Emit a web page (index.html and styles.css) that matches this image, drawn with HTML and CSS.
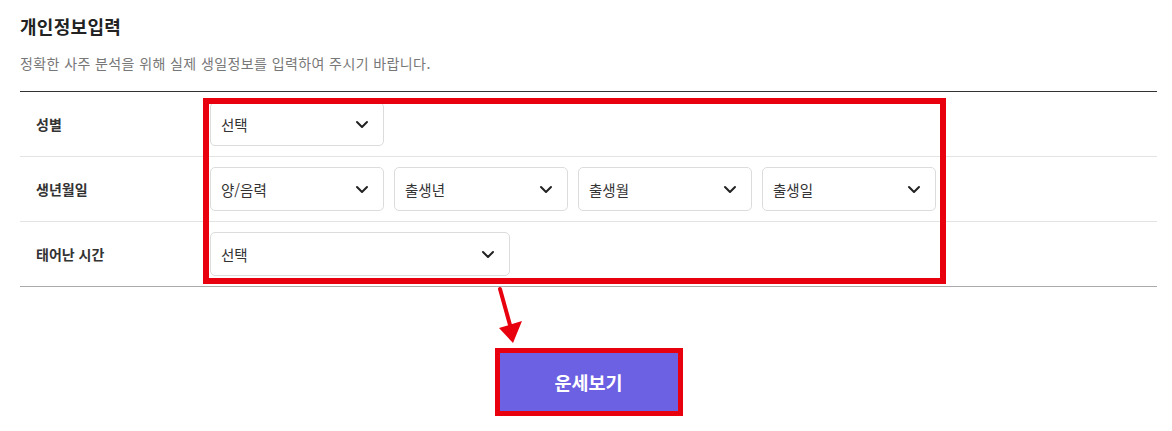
FILE: index.html
```html
<!DOCTYPE html>
<html lang="ko">
<head>
<meta charset="utf-8">
<link rel="stylesheet" href="styles.css">
</head>
<body>
<div class="page">
  <h2 class="title">개인정보입력</h2>
  <p class="desc">정확한 사주 분석을 위해 실제 생일정보를 입력하여 주시기 바랍니다.</p>
  <div class="form">
    <div class="row">
      <div class="label">성별</div>
      <div class="field">
        <div class="select w-sm"><span>선택</span><svg class="chev" viewBox="0 0 12 7"><path d="M1 1l5 5 5-5"/></svg></div>
      </div>
    </div>
    <div class="row">
      <div class="label">생년월일</div>
      <div class="field">
        <div class="select w-sm"><span>양/음력</span><svg class="chev" viewBox="0 0 12 7"><path d="M1 1l5 5 5-5"/></svg></div>
        <div class="select w-sm"><span>출생년</span><svg class="chev" viewBox="0 0 12 7"><path d="M1 1l5 5 5-5"/></svg></div>
        <div class="select w-sm"><span>출생월</span><svg class="chev" viewBox="0 0 12 7"><path d="M1 1l5 5 5-5"/></svg></div>
        <div class="select w-sm"><span>출생일</span><svg class="chev" viewBox="0 0 12 7"><path d="M1 1l5 5 5-5"/></svg></div>
      </div>
    </div>
    <div class="row">
      <div class="label">태어난 시간</div>
      <div class="field">
        <div class="select w-lg"><span>선택</span><svg class="chev" viewBox="0 0 12 7"><path d="M1 1l5 5 5-5"/></svg></div>
      </div>
    </div>
  </div>
  <div class="actions">
    <button class="btn">운세보기</button>
  </div>
</div>
<div class="mark-box"></div>
<svg class="mark-arrow" width="40" height="60" viewBox="0 0 40 60">
  <line x1="8" y1="4" x2="18" y2="40" />
  <polygon points="7,43 30,36 21,58" />
</svg>
</body>
</html>
```
FILE: styles.css
```css
* { box-sizing: border-box; }
html, body { margin: 0; padding: 0; background: #fff; }
body {
  font-family: "Noto Sans CJK KR", "Noto Sans", sans-serif;
  color: #222;
  width: 1172px;
  height: 431px;
  overflow: hidden;
}
.page {
  padding: 0 15px 0 20px;
}
.title {
  margin: 0;
  padding-top: 13px;
  font-size: 18px;
  line-height: 26px;
  font-weight: 700;
  color: #222;
  letter-spacing: 0.3px;
}
.desc {
  margin: 14px 0 0;
  font-size: 14px;
  line-height: 20px;
  color: #777;
  letter-spacing: 0.4px;
}
.form {
  margin-top: 18px;
  border-top: 1px solid #333;
  border-bottom: 1px solid #aaa;
}
.row {
  display: flex;
  align-items: center;
  border-top: 1px solid #e3e3e3;
}
.row:first-child { border-top: 0; }
.label {
  width: 180px;
  flex: none;
  padding-left: 16px;
  font-size: 14px;
  font-weight: 700;
  color: #333;
}
.field {
  display: flex;
  gap: 10px;
  padding: 10px;
}
.select {
  height: 44px;
  border: 1px solid #dcdcdc;
  border-radius: 5px;
  display: flex;
  align-items: center;
  justify-content: space-between;
  padding: 0 15px 0 10px;
  font-size: 14.5px;
  color: #333;
  background: #fff;
}
.w-sm { width: 174px; }
.w-lg { width: 300px; }
.chev {
  width: 12px;
  height: 7px;
  fill: none;
  stroke: #222;
  stroke-width: 2;
  stroke-linecap: round;
  stroke-linejoin: round;
  overflow: visible;
}
.actions {
  display: flex;
  justify-content: center;
  margin-top: 66px;
}
.btn {
  width: 178px;
  height: 58px;
  border: 0;
  background: #6b61e2;
  color: #fff;
  font-family: inherit;
  font-size: 18.5px;
  font-weight: 700;
  outline: 5px solid #e8000e;
}
.mark-box {
  position: absolute;
  left: 203px;
  top: 98px;
  width: 743px;
  height: 186px;
  border: 6px solid #e8000e;
}
.mark-arrow {
  position: absolute;
  left: 492px;
  top: 285px;
}
.mark-arrow line {
  stroke: #e8000e;
  stroke-width: 4;
  stroke-linecap: round;
}
.mark-arrow polygon { fill: #e8000e; }
```
